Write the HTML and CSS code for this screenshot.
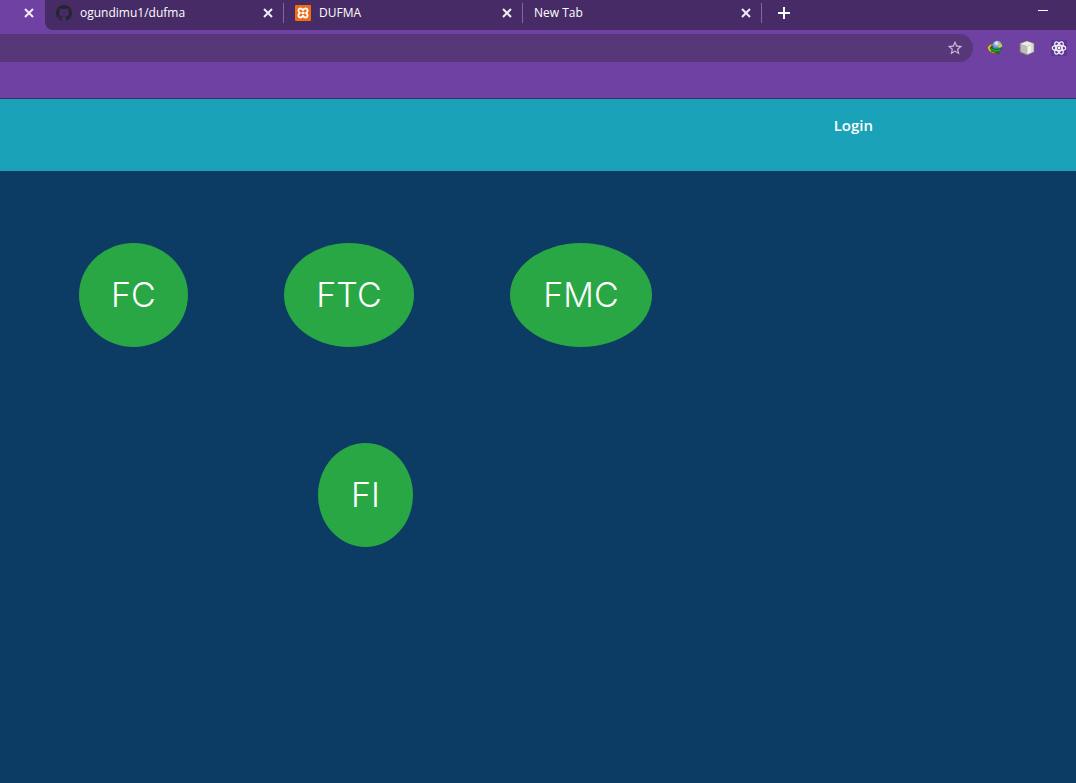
FILE: index.html
```html
<!DOCTYPE html>
<html lang="en">
<head>
<meta charset="utf-8">
<meta name="viewport" content="width=device-width, initial-scale=1">
<title>DUFMA</title>
<link rel="stylesheet" href="styles.css">
</head>
<body>
<header class="browser">
  <div class="tab-strip">
    <div class="active-tab"><button class="close" aria-label="Close tab"><svg viewBox="0 0 10 10"><path d="M1 1l8 8M9 1l-8 8"/></svg></button></div>
    <div class="tabs">
      <div class="tab">
        <svg class="favicon" viewBox="0 0 16 16"><path fill="#24262e" d="M8 0C3.58 0 0 3.58 0 8c0 3.54 2.29 6.53 5.47 7.59.4.07.55-.17.55-.38v-1.49c-2.01.37-2.53-.49-2.69-.94-.09-.23-.48-.94-.82-1.13-.28-.15-.68-.52-.01-.53.63-.01 1.08.58 1.23.82.72 1.21 1.87.87 2.33.66.07-.52.28-.87.51-1.07-1.78-.2-3.64-.89-3.64-3.95 0-.87.31-1.59.82-2.15-.08-.2-.36-1.02.08-2.12 0 0 .67-.21 2.2.82a7.6 7.6 0 0 1 4 0c1.53-1.04 2.2-.82 2.2-.82.44 1.1.16 1.92.08 2.12.51.56.82 1.27.82 2.15 0 3.07-1.87 3.75-3.65 3.95.29.25.54.73.54 1.48v2.2c0 .21.15.46.55.38A8 8 0 0 0 16 8c0-4.42-3.58-8-8-8z"/></svg>
        <span class="tab-title">ogundimu1/dufma</span>
        <button class="close" aria-label="Close tab"><svg viewBox="0 0 10 10"><path d="M1 1l8 8M9 1l-8 8"/></svg></button>
      </div>
      <div class="tab">
        <svg class="favicon" viewBox="0 0 16 16"><rect width="16" height="16" rx="1" fill="#ee6c14"/><path d="M8 5.500C7.300 3.800 6 3.300 4.800 3.600 3.200 4 2.900 6.200 4.200 7.300L5 8l-.8.7c-1.300 1.100-1 3.300.6 3.700 1.200.3 2.500-.2 3.200-1.900.7 1.700 2 2.200 3.200 1.900 1.600-.4 1.900-2.600.6-3.700L11 8l.8-.7c1.300-1.100 1-3.300-.6-3.700C10 3.300 8.700 3.800 8 5.500zM6.500 8h3" fill="none" stroke="#fff" stroke-width="1.800" stroke-linejoin="round"/></svg>
        <span class="tab-title">DUFMA</span>
        <button class="close" aria-label="Close tab"><svg viewBox="0 0 10 10"><path d="M1 1l8 8M9 1l-8 8"/></svg></button>
      </div>
      <div class="tab">
        <span class="tab-title">New Tab</span>
        <button class="close" aria-label="Close tab"><svg viewBox="0 0 10 10"><path d="M1 1l8 8M9 1l-8 8"/></svg></button>
      </div>
      <button class="new-tab" aria-label="New tab"><svg viewBox="0 0 12 12"><path d="M6 0v12M0 6h12"/></svg></button>
      <button class="minimize" aria-label="Minimize"><svg viewBox="0 0 10 1"><path d="M0 0h10v1H0z"/></svg></button>
    </div>
  </div>
  <div class="toolbar">
    <div class="address-bar">
      <input class="address" type="text" aria-label="Address">
      <button class="star" aria-label="Bookmark"><svg viewBox="1 1 22 22"><path d="M22 9.240l-7.190-.62L12 2 9.190 8.630 2 9.240l5.460 4.730L5.820 21 12 17.270 18.180 21l-1.630-7.030L22 9.240zM12 15.400l-3.760 2.270 1-4.280-3.320-2.880 4.380-.38L12 6.100l1.710 4.040 4.380.38-3.320 2.880 1 4.280L12 15.400z"/></svg></button>
    </div>
    <div class="extensions">
      <button class="extension" aria-label="Download manager"><svg viewBox="0 0 16 16">
        <defs><radialGradient id="globe" cx=".4" cy=".25" r=".75"><stop offset="0" stop-color="#fff"/><stop offset=".35" stop-color="#83aed8"/><stop offset="1" stop-color="#244a91"/></radialGradient></defs>
        <ellipse cx="5.800" cy="8.500" rx="5.300" ry="4.300" fill="#f0dc25" stroke="#b23724" transform="rotate(25 5.800 8.500)"/>
        <ellipse cx="6.500" cy="8.600" rx="3.600" ry="2.700" fill="#244a91" stroke="#27a33a" transform="rotate(25 6.500 8.600)"/>
        <circle cx="10.500" cy="5.800" r="5" fill="url(#globe)"/><path d="M12 2.500l2.500 1.500.8 2.500-3 1.500-1.500-2z" fill="#d1c551"/>
        <path d="M4 8l4 1 7.500-.5-2.500 2-1.500 4.500-2.500-3-5-.5z" fill="#067512"/><path d="M4 9l5 2 4-1" stroke="#20c820" fill="none"/>
      </svg></button>
      <button class="extension" aria-label="Cube extension"><svg viewBox="0 0 16 16"><path d="M8 1l7 2.500v8.500L8 15l-7-3V3.500z" fill="#bdbdb7" stroke="#777775"/><path d="M8 1.300l6.500 2.400L8 6 1.500 3.700z" fill="#ecece6"/><path d="M8 6l6.500-2.300v8L8 14.600z" fill="#d9d9d5"/><path d="M9 6.500l3-1v7l-3 1.300z" fill="#f0f0ed"/></svg></button>
      <button class="extension react" aria-label="React tools"><svg viewBox="0 0 16 16"><g fill="none" stroke="#f1edf5" stroke-width="1.200"><ellipse cx="8" cy="8" rx="6.800" ry="2.700"/><ellipse cx="8" cy="8" rx="6.800" ry="2.700" transform="rotate(60 8 8)"/><ellipse cx="8" cy="8" rx="6.800" ry="2.700" transform="rotate(120 8 8)"/></g><circle cx="8" cy="8" r="1.400" fill="#fff"/></svg></button>
    </div>
  </div>
</header>
<nav class="navbar"><a class="login" href="#login">Login</a></nav>
<main class="choices">
  <button class="choice choice-fc">FC</button>
  <button class="choice choice-ftc">FTC</button>
  <button class="choice choice-fmc">FMC</button>
  <button class="choice choice-fi">FI</button>
</main>
</body>
</html>
```
FILE: styles.css
```css
* { box-sizing: border-box; }
body { margin: 0; background: #0c3b63; color: #fff; font-family: "Open Sans", sans-serif; }
button { padding: 0; border: 0; background: none; color: inherit; font: inherit; }
svg { display: block; }
.browser { height: 99px; background: #6e41a2; border-bottom: 1px solid #452a65; }
.tab-strip { display: flex; height: 30px; }
.active-tab { display: flex; justify-content: flex-end; width: 45px; padding: 8px 11px 0 0; }
.tabs { display: flex; flex: 1; min-width: 0; background: #472b66; border-bottom-left-radius: 8px; }
.tab { display: flex; align-items: center; width: 239px; height: 20px; margin-top: 3px; padding: 0 10px 0 11px; border-right: 1px solid #7f6a95; }
.favicon { width: 16px; height: 16px; margin-right: 8px; }
.tab-title { flex: 1; font-size: 12px; line-height: 20px; white-space: nowrap; }
.close { width: 10px; height: 10px; }
.close svg { width: 10px; height: 10px; fill: none; stroke: #f1edf5; stroke-width: 2; }
.new-tab { align-self: flex-start; margin: 7px 0 0 16px; }
.new-tab svg { width: 12px; height: 12px; fill: none; stroke: #fff; stroke-width: 2; }
.minimize { align-self: flex-start; margin: 10px 28px 0 auto; }
.minimize svg { width: 10px; height: 1px; fill: #fff; }
.toolbar { display: flex; align-items: center; padding: 4px 9px 0 0; }
.address-bar { display: flex; align-items: center; flex: 1; height: 28px; padding-right: 10px; background: #57367a; border-radius: 0 14px 14px 0; }
.address { flex: 1; min-width: 0; height: 28px; border: 0; background: transparent; color: #fff; outline: 0; }
.star svg { width: 16px; height: 16px; fill: #c9bdd3; }
.extensions { display: flex; gap: 16px; margin-left: 14px; }
.extension, .extension svg { width: 16px; height: 16px; }
.react { background: #5d3794; }
.navbar { display: flex; justify-content: flex-end; height: 72px; padding: 14px 203px 0 0; background: #19a2b8; }
.login { color: #fff; font-size: 15px; font-weight: 600; line-height: 24px; text-decoration: none; }
.choices { display: flex; flex-wrap: wrap; justify-content: center; gap: 96px; max-width: 731px; padding: 72px 0; }
.choice { height: 104px; border-radius: 50%; background: #29a745; font: 300 34px/40px Inter, sans-serif; }
.choice-fc { width: 109px; }
.choice-ftc { width: 130px; }
.choice-fmc { width: 142px; }
.choice-fi { width: 95px; }
```
